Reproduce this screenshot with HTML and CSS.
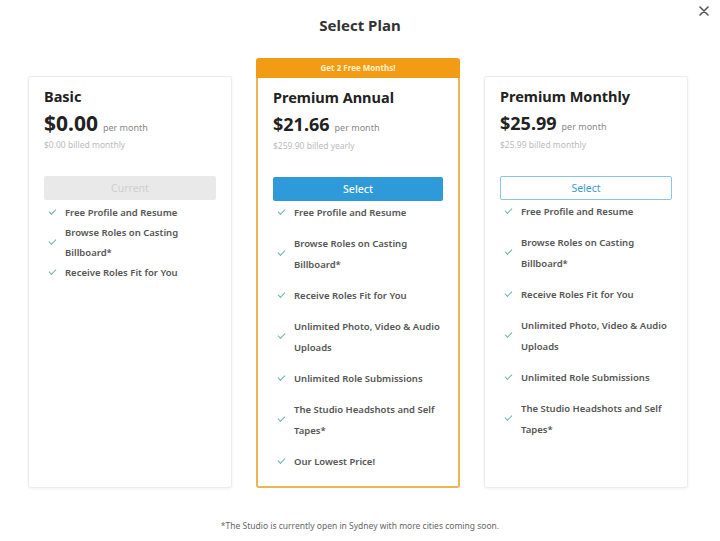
FILE: index.html
```html
<!DOCTYPE html>
<html>
<head>
<meta charset="utf-8">
<link rel="stylesheet" href="styles.css">
</head>
<body>
<div class="modal">
  <button class="close" aria-label="Close">
    <svg width="10" height="10" viewBox="0 0 10 10"><path d="M1 1L9 9M9 1L1 9" stroke="#555" stroke-width="1.6" stroke-linecap="round"/></svg>
  </button>
  <h1 class="title">Select Plan</h1>
  <div class="plans">
    <div class="plan plan-side">
      <div class="card">
        <h2 class="name">Basic</h2>
        <div class="price"><span class="amount amount-large">$0.00</span><span class="per">per month</span></div>
        <div class="billed">$0.00 billed monthly</div>
        <button class="btn btn-current">Current</button>
        <ul class="features compact">
          <li><span class="check"></span><span class="ftext">Free Profile and Resume</span></li>
          <li><span class="check"></span><span class="ftext">Browse Roles on Casting Billboard*</span></li>
          <li><span class="check"></span><span class="ftext">Receive Roles Fit for You</span></li>
        </ul>
      </div>
    </div>
    <div class="plan plan-featured">
      <div class="banner">Get 2 Free Months!</div>
      <div class="card card-featured">
        <h2 class="name">Premium Annual</h2>
        <div class="price"><span class="amount">$21.66</span><span class="per">per month</span></div>
        <div class="billed">$259.90 billed yearly</div>
        <button class="btn btn-primary">Select</button>
        <ul class="features">
          <li><span class="check"></span><span class="ftext">Free Profile and Resume</span></li>
          <li><span class="check"></span><span class="ftext">Browse Roles on Casting Billboard*</span></li>
          <li><span class="check"></span><span class="ftext">Receive Roles Fit for You</span></li>
          <li><span class="check"></span><span class="ftext">Unlimited Photo, Video &amp; Audio Uploads</span></li>
          <li><span class="check"></span><span class="ftext">Unlimited Role Submissions</span></li>
          <li><span class="check"></span><span class="ftext">The Studio Headshots and Self Tapes*</span></li>
          <li><span class="check"></span><span class="ftext">Our Lowest Price!</span></li>
        </ul>
      </div>
    </div>
    <div class="plan plan-side">
      <div class="card">
        <h2 class="name">Premium Monthly</h2>
        <div class="price"><span class="amount">$25.99</span><span class="per">per month</span></div>
        <div class="billed">$25.99 billed monthly</div>
        <button class="btn btn-outline">Select</button>
        <ul class="features">
          <li><span class="check"></span><span class="ftext">Free Profile and Resume</span></li>
          <li><span class="check"></span><span class="ftext">Browse Roles on Casting Billboard*</span></li>
          <li><span class="check"></span><span class="ftext">Receive Roles Fit for You</span></li>
          <li><span class="check"></span><span class="ftext">Unlimited Photo, Video &amp; Audio Uploads</span></li>
          <li><span class="check"></span><span class="ftext">Unlimited Role Submissions</span></li>
          <li><span class="check"></span><span class="ftext">The Studio Headshots and Self Tapes*</span></li>
        </ul>
      </div>
    </div>
  </div>
  <p class="footnote">*The Studio is currently open in Sydney with more cities coming soon.</p>
</div>
</body>
</html>
```

FILE: styles.css
```css
* { box-sizing: border-box; }
html, body { margin: 0; padding: 0; background: #fff; }
body {
  font-family: "Noto Sans", "Open Sans", sans-serif;
  color: #333;
  width: 720px;
  height: 541px;
  overflow: hidden;
}
.modal {
  position: relative;
  width: 720px;
  height: 541px;
  padding-top: 14px;
}
.close {
  position: absolute;
  top: 5px;
  right: 10px;
  width: 12px;
  height: 12px;
  padding: 0;
  border: 0;
  background: none;
  display: flex;
  align-items: center;
  justify-content: center;
}
.title {
  margin: 0;
  text-align: center;
  font-size: 15px;
  line-height: 22px;
  font-weight: 700;
  color: #333;
}
.plans {
  display: flex;
  gap: 24px;
  padding-left: 28px;
  margin-top: 22px;
  height: 430px;
}
.plan {
  width: 204px;
  display: flex;
  flex-direction: column;
}
.plan-side { padding-top: 18px; }
.card {
  flex: 1;
  border: 1px solid #ececec;
  border-radius: 3px;
  box-shadow: 0 1px 3px rgba(0,0,0,0.06);
  padding: 9px 15px 0 15px;
  background: #fff;
}
.card-featured {
  border: 2px solid #e9b64f;
  border-top: none;
  border-radius: 0 0 3px 3px;
  padding: 9px 15px 0 15px;
  box-shadow: none;
}
.banner {
  height: 20px;
  background: #f29b14;
  color: #fff1cf;
  font-size: 8px;
  font-weight: 700;
  line-height: 20px;
  text-align: center;
  border-radius: 3px 3px 0 0;
}
.name {
  margin: 0;
  font-size: 14.5px;
  line-height: 20px;
  font-weight: 700;
  color: #222;
}
.price {
  margin-top: 4px;
  display: flex;
  align-items: baseline;
  height: 26px;
}
.amount {
  font-size: 18px;
  line-height: 26px;
  font-weight: 700;
  color: #222;
}
.amount-large { font-size: 21px; }
.per {
  font-size: 9px;
  color: #888;
  margin-left: 5px;
}
.billed {
  margin-top: 3px;
  font-size: 8.5px;
  line-height: 12px;
  color: #bbb;
}
.btn {
  display: block;
  width: 100%;
  height: 24px;
  margin-top: 25px;
  border-radius: 2px;
  font-family: inherit;
  font-size: 10.5px;
  padding: 0;
}
.btn-current {
  background: #e9e9e9;
  border: 0;
  color: #cfcfcf;
}
.btn-primary {
  background: #2e9ad9;
  border: 0;
  color: #fff;
  font-weight: 500;
}
.btn-outline {
  background: #fff;
  border: 1px solid #8cc6e6;
  color: #3a9bd3;
}
.features {
  list-style: none;
  margin: 1px 0 0 0;
  padding: 0;
  display: flex;
  flex-direction: column;
  gap: 10px;
}
.features.compact { gap: 0; margin-top: 3px; }
.features li {
  display: flex;
  align-items: center;
  font-size: 9.5px;
  font-weight: 600;
  line-height: 21px;
  color: #555;
}
.features.compact li { line-height: 20px; }
.check {
  flex: none;
  width: 21px;
  height: 10px;
  position: relative;
}
.check::after {
  content: "";
  position: absolute;
  left: 5px;
  top: 1px;
  width: 6px;
  height: 3px;
  border-left: 1.3px solid #6fb3b0;
  border-bottom: 1.3px solid #6fb3b0;
  transform: rotate(-45deg);
}
.ftext { flex: 1; }
.footnote {
  margin: 32px 0 0 0;
  text-align: center;
  font-size: 8.5px;
  color: #666;
}
```
